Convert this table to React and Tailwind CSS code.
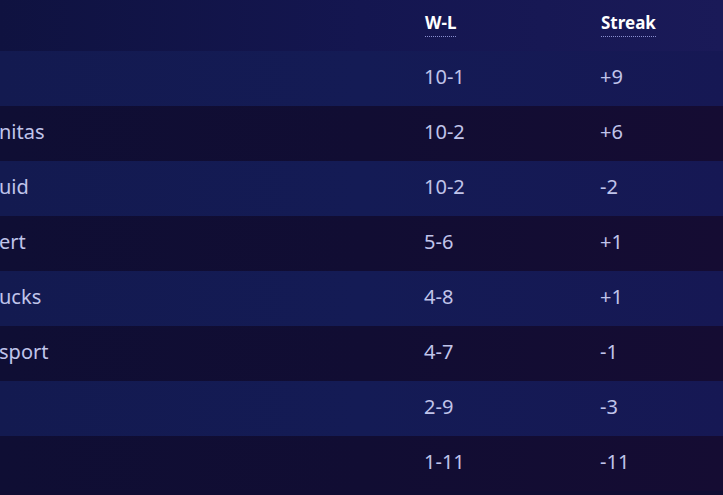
import React from "react";

const rows = [
  { name: "", wl: "10-1", streak: "+9" },
  { name: "nitas", wl: "10-2", streak: "+6" },
  { name: "uid", wl: "10-2", streak: "-2" },
  { name: "ert", wl: "5-6", streak: "+1" },
  { name: "ucks", wl: "4-8", streak: "+1" },
  { name: "sport", wl: "4-7", streak: "-1" },
  { name: "", wl: "2-9", streak: "-3" },
  { name: "", wl: "1-11", streak: "-11" },
];

export default function App() {
  return (
    <div
      className="w-[723px] h-[495px] overflow-hidden bg-[#100d33] text-[#c0c4ea]"
      style={{ fontFamily: '"Noto Sans", "Open Sans", sans-serif' }}
    >
      {/* Header */}
      <div className="h-[51px] flex items-start pt-[11px] bg-gradient-to-r from-[#0f1240] via-[#141650] to-[#1a1a58]">
        <div className="w-[425px]" />
        <div className="w-[176px]">
          <span className="text-[17px] leading-[22px] font-bold text-white border-b border-dotted border-[#8a8fd0] pb-[2px]">
            W-L
          </span>
        </div>
        <div className="flex-1">
          <span className="text-[17px] leading-[22px] font-bold text-white border-b border-dotted border-[#8a8fd0] pb-[2px]">
            Streak
          </span>
        </div>
      </div>

      {/* Rows */}
      {rows.map((r, i) => (
        <div
          key={i}
          className={
            "h-[55px] flex items-center pb-[3px] text-[20px] " +
            (i % 2 === 0
              ? "bg-gradient-to-r from-[#131a50] via-[#141b55] to-[#161854]"
              : "bg-gradient-to-r from-[#0f0e34] via-[#110d33] to-[#150c33]")
          }
        >
          <div className="w-[425px] -ml-[1px]">{r.name}</div>
          <div className="w-[176px]">{r.wl}</div>
          <div className="flex-1">{r.streak}</div>
        </div>
      ))}
    </div>
  );
}
